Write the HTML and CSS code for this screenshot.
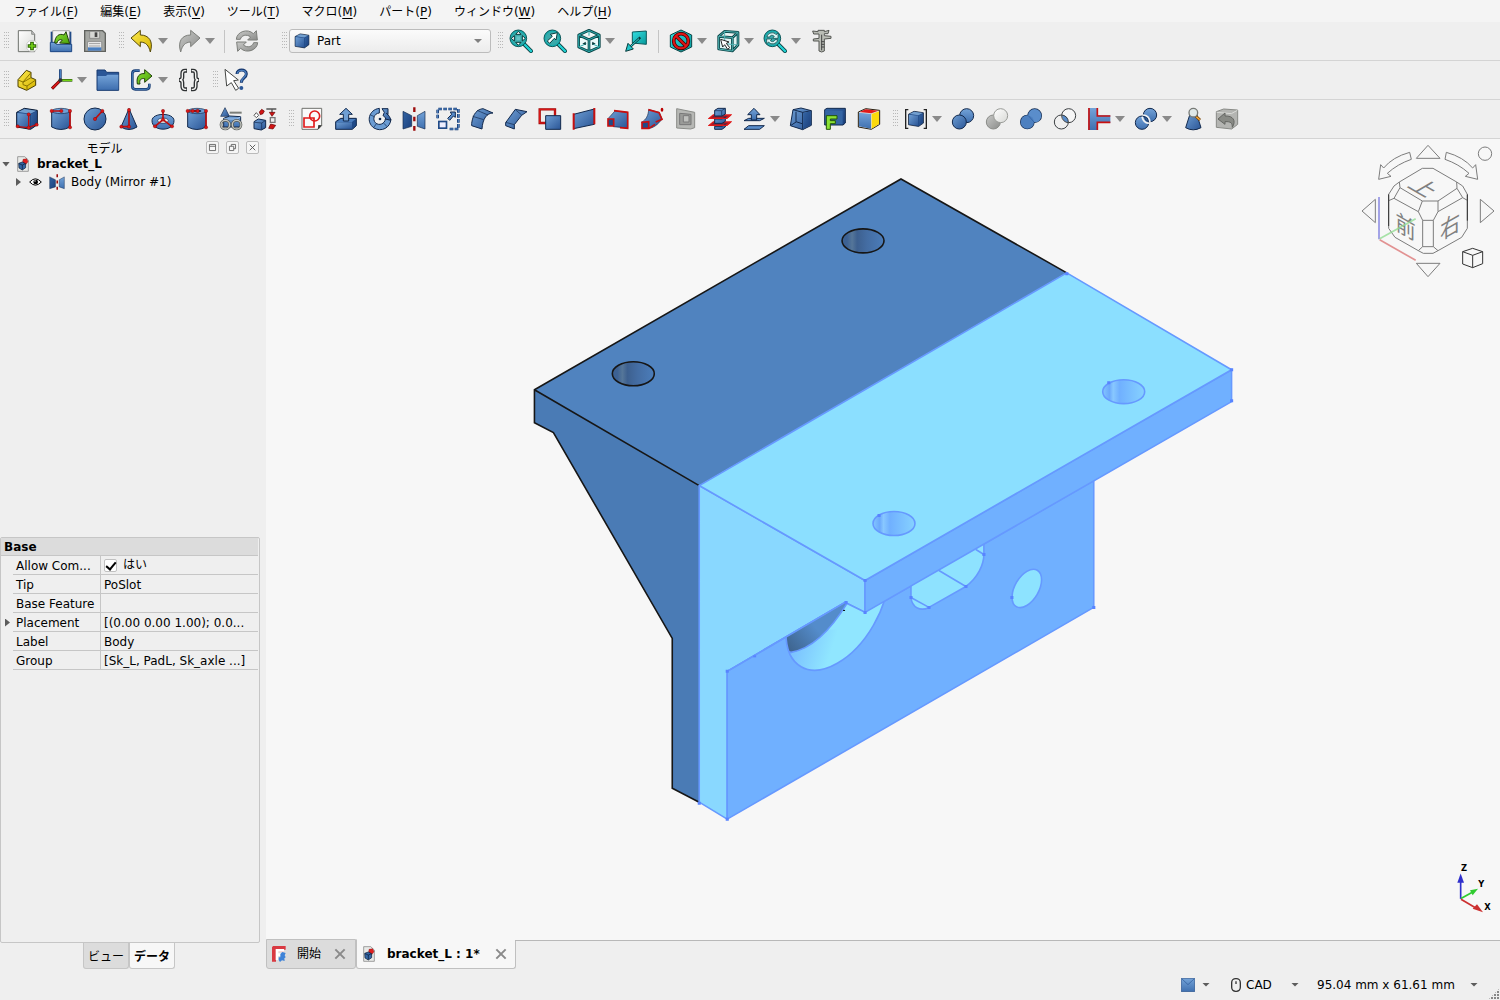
FILE: index.html
```html
<!DOCTYPE html>
<html lang="ja">
<head>
<meta charset="utf-8">
<title>bracket_L</title>
<link rel="stylesheet" href="styles.css">
</head>
<body>
<svg class="defs" aria-hidden="true">
  <defs>
    <linearGradient id="gb" x1="0" y1="0" x2="1" y2="1"><stop offset="0" stop-color="#6f9fd4"/><stop offset="1" stop-color="#2a5596"/></linearGradient>
    <linearGradient id="gl" x1="0" y1="0" x2="0" y2="1"><stop offset="0" stop-color="#74a3d8"/><stop offset="1" stop-color="#3f70b0"/></linearGradient>
    <linearGradient id="gd" x1="0" y1="0" x2="1" y2="1"><stop offset="0" stop-color="#3465a4"/><stop offset="1" stop-color="#1b3f7c"/></linearGradient>
    <linearGradient id="gt" x1="0" y1="0" x2="1" y2="1"><stop offset="0" stop-color="#34e0e2"/><stop offset="1" stop-color="#06989a"/></linearGradient>
    <linearGradient id="gg" x1="0" y1="0" x2="1" y2="1"><stop offset="0" stop-color="#c8c9c7"/><stop offset="1" stop-color="#8b8c8a"/></linearGradient>
    <linearGradient id="gy" x1="0" y1="0" x2="1" y2="1"><stop offset="0" stop-color="#fce94f"/><stop offset="1" stop-color="#d5b400"/></linearGradient>
    <linearGradient id="gn" x1="0" y1="0" x2="1" y2="1"><stop offset="0" stop-color="#8ae234"/><stop offset="1" stop-color="#4aa00a"/></linearGradient>
    <linearGradient id="gw" x1="0" y1="0" x2="1" y2="1"><stop offset="0" stop-color="#ffffff"/><stop offset="1" stop-color="#d8d9d6"/></linearGradient>
    <symbol id="cube" viewBox="0 0 72 72"><path d="M5 16 28 4 67 10 67 53 47 67 5 60Z" fill="#204a87" stroke="#0b1b33" stroke-width="3"/><path d="M7 18 45 22 45 64 7 58Z" fill="url(#gb)"/><path d="M9 15 28 6 64 11 46 20Z" fill="#729fcf"/><path d="M48 22 65 13V51L48 64Z" fill="url(#gd)"/></symbol>
    <symbol id="mirror" viewBox="0 0 72 72"><path d="M3 13 29 26V58L3 66Z" fill="url(#gd)" stroke="#12294d" stroke-width="2"/><path d="M69 13 46 26V58L69 66Z" fill="url(#gl)" stroke="#12294d" stroke-width="2"/><path d="M37 1V71" stroke="#9c0b0b" stroke-width="7" stroke-dasharray="14 14"/></symbol>
    <symbol id="doc" viewBox="0 0 36 48"><path d="M2 2H23L34 12V46H2Z" fill="#e9eae8" stroke="#777" stroke-width="2"/><path d="M18 10 29 8 33 17 26 26 17 20Z" fill="#e02020" stroke="#6b0000" stroke-width="1"/><path d="M5 22 16 18 26 23V35L16 42 6 36Z" fill="#3465a4" stroke="#0b1b33" stroke-width="2"/><path d="M6 23 16 27 25 23M16 27V41" stroke="#0b1b33" stroke-width="2" fill="none"/></symbol>
    <symbol id="zoomlens" viewBox="0 0 72 72"><path d="M44 44 66 66" stroke="#0c3536" stroke-width="12" stroke-linecap="square"/><path d="M46 46 66 66" stroke="#20d0d2" stroke-width="7" stroke-linecap="square"/><circle cx="28" cy="28" r="25" fill="#16adaf" stroke="#0d5658" stroke-width="3"/><circle cx="28" cy="28" r="20" fill="#39a9aa"/></symbol>
    <symbol id="close" viewBox="0 0 36 36"><path d="M4 4 32 32M32 4 4 32" stroke="#8a8a8a" stroke-width="6"/></symbol>
  </defs>
</svg>

<nav class="menubar">
  <button type="button">ファイル(<u>F</u>)</button>
  <button type="button">編集(<u>E</u>)</button>
  <button type="button">表示(<u>V</u>)</button>
  <button type="button">ツール(<u>T</u>)</button>
  <button type="button">マクロ(<u>M</u>)</button>
  <button type="button">パート(<u>P</u>)</button>
  <button type="button">ウィンドウ(<u>W</u>)</button>
  <button type="button">ヘルプ(<u>H</u>)</button>
</nav>

<div class="toolrow">
  <div class="toolbar">
    <span class="grip"></span>
    <button class="tool" type="button" aria-label="新規"><svg viewBox="0 0 72 72"><path d="M10 5H50L59 16V68H10Z" fill="url(#gw)" stroke="#6d706b" stroke-width="3"/><path d="M50 5V16H59" fill="#bbb" stroke="#6d706b" stroke-width="2"/><circle cx="51" cy="51" r="17" fill="#fff" stroke="#b8bab6" stroke-width="2"/><path d="M51 38V64M38 51H64" stroke="#2c6204" stroke-width="11"/><path d="M51 41V61M41 51H61" stroke="#73d216" stroke-width="5"/></svg></button>
    <button class="tool" type="button" aria-label="開く"><svg viewBox="0 0 72 72"><path d="M5 8H67V68H5Z" fill="#204a87"/><path d="M11 5H61V50H11Z" fill="#f2f2f2" stroke="#888" stroke-width="2"/><path d="M4 40H18L22 46H68V68H4Z" fill="url(#gl)" stroke="#204a87" stroke-width="3"/><path d="M17 42C18 20 32 12 45 18L51 8 62 44 32 42 40 33C32 30 26 34 24 42Z" fill="url(#gn)" stroke="#21400a" stroke-width="3"/></svg></button>
    <button class="tool" type="button" aria-label="保存"><svg viewBox="0 0 72 72"><path d="M5 5H59L67 13V67H5Z" fill="#a5a7a3" stroke="#60625e" stroke-width="4"/><path d="M20 7H50V28H20Z" fill="#d6d7d4" stroke="#777" stroke-width="2"/><path d="M35 10H43V24H35Z" fill="#444"/><path d="M14 38H56V65H14Z" fill="#f4f4f4" stroke="#777" stroke-width="2"/><path d="M18 44H52M18 51H52" stroke="#999" stroke-width="3"/><path d="M15 55H55V65H15Z" fill="#4a7fc0"/></svg></button>
  </div>
  <div class="toolbar">
    <span class="grip"></span>
    <button class="tool" type="button" aria-label="元に戻す"><svg viewBox="0 0 72 72"><path d="M3 27 31 4V18C57 18 71 37 61 69 56 49 48 40 31 39V53Z" fill="url(#gy)" stroke="#54480a" stroke-width="3"/></svg></button><button class="drop" type="button" aria-label="履歴"></button>
    <button class="tool" type="button" aria-label="やり直す"><svg viewBox="0 0 72 72"><path d="M69 27 41 4V18C15 18 1 37 11 69 16 49 24 40 41 39V53Z" fill="url(#gg)" stroke="#7d7f7b" stroke-width="3"/></svg></button><button class="drop" type="button" aria-label="履歴"></button>
    <span class="sep"></span>
    <button class="tool" type="button" aria-label="更新"><svg viewBox="0 0 72 72"><path d="M4 31C5 8 38-3 55 14L64 5 67 33H38L47 24C34 14 19 19 16 31Z" fill="url(#gg)" stroke="#7c7e7a" stroke-width="3"/><path d="M68 41C67 64 34 75 17 58L8 67 5 39H34L25 48C38 58 53 53 56 41Z" fill="url(#gg)" stroke="#7c7e7a" stroke-width="3"/></svg></button>
  </div>
  <div class="toolbar workbench">
    <span class="grip"></span>
    <label class="combo"><svg class="i16"><use href="#cube"/></svg><select aria-label="ワークベンチ"><option>Part</option></select></label>
  </div>
  <div class="toolbar">
    <span class="grip"></span>
    <button class="tool" type="button" aria-label="全体表示"><svg viewBox="0 0 72 72"><use href="#zoomlens"/><path d="M28 7 36 16H20ZM28 49 36 40H20ZM7 28 16 20V36ZM49 28 40 20V36Z" fill="#fff" stroke="#083b3c" stroke-width="3"/><path d="M22 22H34V34H22Z" fill="#63c5c6"/></svg></button>
    <button class="tool" type="button" aria-label="選択表示"><svg viewBox="0 0 72 72"><use href="#zoomlens"/><path d="M13 36 28 22 22 16 43 11 39 33 34 28 20 43Z" fill="#fff" stroke="#083b3c" stroke-width="3"/></svg></button>
    <button class="tool" type="button" aria-label="アイソメトリック"><svg viewBox="0 0 72 72"><path d="M36 4 67 18V54L36 68 5 54V18ZM5 18 36 32 67 18M36 32V68" fill="#eafafa" stroke="#0c4749" stroke-width="8" stroke-linejoin="round"/><path d="M36 4 67 18V54L36 68 5 54V18ZM5 18 36 32 67 18M36 32V68M5 54 28 44M67 54 45 44M36 4V20" fill="none" stroke="#2aa9ab" stroke-width="3"/><path d="M16 44 26 38 27 48ZM56 44 46 38 45 48Z" fill="#083b3c"/></svg></button><button class="drop" type="button" aria-label="ビュー"></button>
    <button class="tool" type="button" aria-label="面に正対"><svg viewBox="0 0 72 72"><path d="M25 9 67 6V46L25 42Z" fill="url(#gt)" stroke="#0a5a5c" stroke-width="3"/><path d="M49 25 20 52" stroke="#083b3c" stroke-width="7"/><path d="M45 29 20 52" stroke="#34e0e2" stroke-width="3"/><path d="M5 67 12 43 28 60Z" fill="#20c5c8" stroke="#083b3c" stroke-width="3"/></svg></button>
    <span class="sep"></span>
    <button class="tool" type="button" aria-label="描画スタイル"><svg viewBox="0 0 72 72"><path d="M36 3 68 18V54L36 69 4 54V18Z" fill="url(#gt)" stroke="#0a4546" stroke-width="3"/><circle cx="36" cy="36" r="22" fill="none" stroke="#4b0000" stroke-width="11"/><path d="M21 21 51 51" stroke="#4b0000" stroke-width="11"/><circle cx="36" cy="36" r="22" fill="none" stroke="#e01515" stroke-width="6"/><path d="M21 21 51 51" stroke="#e01515" stroke-width="6"/></svg></button><button class="drop" type="button" aria-label="スタイル"></button>
    <button class="tool" type="button" aria-label="選択モード"><svg viewBox="0 0 72 72"><path d="M8 22 26 7 66 10 66 48 49 66 8 60ZM8 22 49 26 66 10M49 26V66" fill="#dff3f3" stroke="#0c4749" stroke-width="8" stroke-linejoin="round"/><path d="M8 22 26 7 66 10 66 48 49 66 8 60ZM8 22 49 26 66 10M49 26V66M26 7V44M26 44 66 48" fill="none" stroke="#4fb1b2" stroke-width="3"/><path d="M14 31 39 39 31 43 41 56 35 61 26 47 20 54Z" fill="#fff" stroke="#222" stroke-width="3"/></svg></button><button class="drop" type="button" aria-label="選択"></button>
    <button class="tool" type="button" aria-label="ズーム"><svg viewBox="0 0 72 72"><use href="#zoomlens"/><path d="M12 24C14 10 34 8 39 17L45 12V28H29L34 22C28 17 22 18 20 24ZM44 32C42 46 22 48 17 39L11 44V30H27L22 35C28 40 34 38 36 32Z" fill="#d9f4f4" stroke="#083b3c" stroke-width="2"/></svg></button><button class="drop" type="button" aria-label="倍率"></button>
    <button class="tool" type="button" aria-label="計測"><svg viewBox="0 0 72 72"><path d="M8 6 24 8V4H43V8L57 4 54 14H43V20L63 22V28L43 30V66L35 69 27 66V36L10 36V30L27 28V15H11Z" fill="#babdb6" stroke="#555753" stroke-width="3"/><path d="M35 17V64M43 38H34M43 46H34M43 54H34" stroke="#444" stroke-width="3"/></svg></button>
  </div>
</div>

<div class="toolrow">
  <div class="toolbar">
    <span class="grip"></span>
    <button class="tool" type="button" aria-label="パーツ"><svg viewBox="0 0 72 72"><path d="M9 35 34 7 48 13V29L62 35V52L35 67 9 56Z" fill="url(#gy)" stroke="#4a3f00" stroke-width="3"/><path d="M9 36 24 42 48 14M24 42V50L36 54 62 36M36 54V66M24 43 48 29" fill="none" stroke="#8a7500" stroke-width="3"/></svg></button>
    <button class="tool" type="button" aria-label="座標系"><svg viewBox="0 0 72 72"><path d="M34 37V4" stroke="#15356a" stroke-width="8"/><path d="M34 37V5" stroke="#4a7fc0" stroke-width="4"/><path d="M36 37H70" stroke="#2d6108" stroke-width="8"/><path d="M36 37H69" stroke="#73d216" stroke-width="4"/><path d="M32 39 9 62" stroke="#6b0000" stroke-width="9"/><path d="M32 39 10 61" stroke="#dd1818" stroke-width="5"/><circle cx="34" cy="37" r="6" fill="#333"/></svg></button><button class="drop" type="button" aria-label="データム"></button>
    <button class="tool" type="button" aria-label="グループ"><svg viewBox="0 0 72 72"><path d="M3 6H27L32 13H68V67H3Z" fill="#2b5797" stroke="#183a70" stroke-width="3"/><path d="M5 24H30L34 20H67V65H5Z" fill="url(#gl)"/></svg></button>
    <button class="tool" type="button" aria-label="リンク"><svg viewBox="0 0 72 72"><path d="M29 8H16Q7 8 7 17V55Q7 64 16 64H49Q58 64 58 55V47" fill="none" stroke="#173d74" stroke-width="8"/><path d="M29 8H16Q7 8 7 17V55Q7 64 16 64H49Q58 64 58 55V47" fill="none" stroke="#4b80bf" stroke-width="3"/><path d="M22 48C18 25 29 15 44 17V5L66 24 44 43V32C33 30 27 36 30 48Z" fill="url(#gn)" stroke="#21400a" stroke-width="3"/></svg></button><button class="drop" type="button" aria-label="リンク操作"></button>
    <button class="tool" type="button" aria-label="変数セット"><svg viewBox="0 0 72 72"><path d="M30 8H24Q16 8 16 17V28Q16 36 6 36 16 36 16 44V55Q16 64 24 64H30M42 8H48Q56 8 56 17V28Q56 36 66 36 56 36 56 44V55Q56 64 48 64H42" fill="none" stroke="#2e3133" stroke-width="12"/><path d="M28 8H24Q16 8 16 17V28Q16 36 8 36 16 36 16 44V55Q16 64 24 64H28M44 8H48Q56 8 56 17V28Q56 36 64 36 56 36 56 44V55Q56 64 48 64H44" fill="none" stroke="#f4f4f2" stroke-width="4"/></svg></button>
  </div>
  <div class="toolbar">
    <span class="grip"></span>
    <button class="tool" type="button" aria-label="ヘルプ"><svg viewBox="0 0 72 72"><path d="M39 18C39 2 67 2 67 18 67 30 52 29 52 44" fill="none" stroke="#16366c" stroke-width="9"/><path d="M40 17C40 4 66 4 66 18 66 29 52 28 52 43" fill="none" stroke="#4b7fc0" stroke-width="4"/><circle cx="52" cy="60" r="6" fill="#2b5797"/><path d="M3 4 43 36 29 38 44 61 35 67 22 44 8 54Z" fill="#fff" stroke="#454745" stroke-width="3"/></svg></button>
  </div>
</div>

<div class="toolrow">
  <div class="toolbar">
    <span class="grip"></span>
    <button class="tool" type="button" aria-label="直方体"><svg viewBox="0 0 72 72"><use href="#cube"/><path d="M41 22V62M7 59 41 62 66 52" stroke="#c00d0d" stroke-width="4" fill="none"/><g fill="#dc1616" stroke="#640000"><circle cx="41" cy="22" r="5"/><circle cx="41" cy="62" r="5"/><circle cx="8" cy="58" r="5"/><circle cx="65" cy="53" r="5"/></g></svg></button>
    <button class="tool" type="button" aria-label="円柱"><svg viewBox="0 0 72 72"><path d="M8 13V60Q36 75 63 60V13Z" fill="url(#gb)" stroke="#12294d" stroke-width="3"/><ellipse cx="36" cy="12" rx="27" ry="8" fill="#6f9fd4" stroke="#12294d" stroke-width="2"/><path d="M8 12H37M63 12V61" stroke="#c00d0d" stroke-width="5"/><g fill="#dc1616" stroke="#640000"><circle cx="8" cy="12" r="5"/><circle cx="37" cy="12" r="5"/><circle cx="63" cy="12" r="5"/><circle cx="63" cy="61" r="5"/></g></svg></button>
    <button class="tool" type="button" aria-label="球"><svg viewBox="0 0 72 72"><circle cx="36" cy="36" r="33" fill="url(#gb)" stroke="#12294d" stroke-width="3"/><path d="M36 36 58 12" stroke="#c00d0d" stroke-width="5"/><g fill="#dc1616" stroke="#640000"><circle cx="36" cy="36" r="5"/><circle cx="58" cy="12" r="5"/></g></svg></button>
    <button class="tool" type="button" aria-label="円錐"><svg viewBox="0 0 72 72"><path d="M36 5 60 60Q36 75 12 60Z" fill="url(#gb)" stroke="#12294d" stroke-width="3"/><path d="M36 10V59H13" fill="none" stroke="#c00d0d" stroke-width="5"/><g fill="#dc1616" stroke="#640000"><circle cx="36" cy="9" r="5"/><circle cx="36" cy="59" r="5"/><circle cx="13" cy="59" r="5"/></g></svg></button>
    <button class="tool" type="button" aria-label="トーラス"><svg viewBox="0 0 72 72"><path d="M3 41C3 16 69 16 69 41 69 75 3 75 3 41Z" fill="url(#gl)" stroke="#12294d" stroke-width="3"/><ellipse cx="36" cy="41" rx="16" ry="8" fill="#eee" stroke="#12294d" stroke-width="2"/><path d="M36 12V38L12 58M36 38 62 58" fill="none" stroke="#c00d0d" stroke-width="5"/><g fill="#dc1616" stroke="#640000"><circle cx="36" cy="12" r="5"/><circle cx="36" cy="38" r="5"/><circle cx="12" cy="58" r="5"/><circle cx="63" cy="58" r="5"/></g></svg></button>
    <button class="tool" type="button" aria-label="チューブ"><svg viewBox="0 0 72 72"><path d="M8 13V60Q36 75 63 60V13Z" fill="url(#gb)" stroke="#12294d" stroke-width="3"/><ellipse cx="36" cy="12" rx="27" ry="8" fill="#6f9fd4" stroke="#12294d" stroke-width="2"/><ellipse cx="36" cy="12" rx="13" ry="4" fill="#12294d"/><path d="M8 12H40M63 12V61" stroke="#c00d0d" stroke-width="5"/><g fill="#dc1616" stroke="#640000"><circle cx="8" cy="12" r="5"/><circle cx="23" cy="12" r="5"/><circle cx="38" cy="12" r="5"/><circle cx="63" cy="12" r="5"/><circle cx="63" cy="61" r="5"/></g></svg></button>
    <button class="tool" type="button" aria-label="プリミティブ"><svg viewBox="0 0 72 72"><path d="M18 2 31 28H5Z" fill="url(#gb)" stroke="#12294d" stroke-width="2"/><path d="M32 17H68" stroke="#7b7e79" stroke-width="6"/><path d="M14 34 32 27 65 29V60H14Z" fill="url(#gl)" stroke="#12294d" stroke-width="3"/><path d="M15 36H54L64 30" stroke="#9dbfe6" stroke-width="3" fill="none"/><g fill="none" stroke="#555854" stroke-width="8"><circle cx="19" cy="53" r="13"/><circle cx="53" cy="53" r="13"/></g><g fill="none" stroke="#c4c6c1" stroke-width="4"><circle cx="19" cy="53" r="13"/><circle cx="53" cy="53" r="13"/></g></svg></button>
    <button class="tool" type="button" aria-label="シェイプビルダー"><svg viewBox="0 0 72 72"><path d="M3 44 16 36 38 40V62L25 69 3 65Z" fill="url(#gb)" stroke="#12294d" stroke-width="3"/><path d="M4 46 26 48 37 41M26 48V68" fill="none" stroke="#12294d" stroke-width="2"/><path d="M10 17 17 25 10 32 3 25Z" fill="#fff" stroke="#555" stroke-width="3"/><path d="M52 32H66V46H52Z" fill="#eee" stroke="#777" stroke-width="4"/><path d="M40 6H70M57 8V24" stroke="#555" stroke-width="4"/><path d="M19 15 26 7 34 12 30 20 22 23ZM49 16H66L57 28ZM47 64 53 51 68 55 60 66Z" fill="#d21515" stroke="#640000" stroke-width="2"/></svg></button>
  </div>
  <div class="toolbar">
    <span class="grip"></span>
    <button class="tool" type="button" aria-label="スケッチ"><svg viewBox="0 0 72 72"><path d="M6 4H65V56L54 67H6Z" fill="#fafafa" stroke="#70726e" stroke-width="3"/><path d="M53 68 55 54 66 55Z" fill="#333"/><circle cx="44" cy="27" r="15" fill="none" stroke="#e01b1b" stroke-width="5"/><path d="M12 33H42V60H12Z" fill="none" stroke="#e01b1b" stroke-width="5"/></svg></button>
    <button class="tool" type="button" aria-label="押し出し"><svg viewBox="0 0 72 72"><path d="M5 44 20 34H67V56L55 67H5Z" fill="#204a87" stroke="#12294d" stroke-width="3"/><path d="M7 46H54V65H7Z" fill="url(#gb)"/><path d="M7 45 21 36H65L54 45Z" fill="#4b7fc0"/><path d="M28 42V22H17L36 4 55 22H44V42Z" fill="#6f9fd4" stroke="#12294d" stroke-width="3"/></svg></button>
    <button class="tool" type="button" aria-label="回転"><svg viewBox="0 0 72 72"><path d="M34 4V18C18 19 13 37 22 47 33 58 51 50 52 36H69C67 63 40 76 18 63-7 46 2 8 34 4Z" fill="#6b9cd3" stroke="#12294d" stroke-width="3"/><path d="M42 5H60V23L55 19C63 25 67 31 68 40L53 36C52 31 50 28 45 26L49 16Z" fill="url(#gb)" stroke="#12294d" stroke-width="3"/><circle cx="36" cy="36" r="4" fill="#12294d"/><path d="M8 24 19 29M18 60 26 49M48 49 57 59" stroke="#12294d" stroke-width="2"/></svg></button>
    <button class="tool" type="button" aria-label="ミラー"><svg viewBox="0 0 72 72"><use href="#mirror"/></svg></button>
    <button class="tool" type="button" aria-label="拡大縮小"><svg viewBox="0 0 72 72"><path d="M5 34V6H67V66H39" fill="none" stroke="#173a72" stroke-width="8" stroke-dasharray="11 4"/><path d="M5 34V6H67V66H39" fill="none" stroke="#5a8dcb" stroke-width="3" stroke-dasharray="11 4"/><path d="M6 41H34V66H6Z" fill="#204a87"/><path d="M11 46H29V61H11Z" fill="#eef"/><path d="M35 34 47 22 43 15H58V31L52 27 41 40Z" fill="#5a8dcb" stroke="#12294d" stroke-width="3"/></svg></button>
    <button class="tool" type="button" aria-label="フィレット"><svg viewBox="0 0 72 72"><path d="M5 49C9 19 22 7 39 5L69 18C51 18 38 34 36 66L5 56Z" fill="url(#gb)" stroke="#12294d" stroke-width="3"/><path d="M8 28 41 38M21 10 54 24" stroke="#12294d" stroke-width="2"/></svg></button>
    <button class="tool" type="button" aria-label="面取り"><svg viewBox="0 0 72 72"><path d="M5 47 34 7 69 14 53 25 31 53V66L5 56Z" fill="url(#gb)" stroke="#12294d" stroke-width="3"/><path d="M5 46 31 53M34 8 53 24" stroke="#12294d" stroke-width="2"/></svg></button>
    <button class="tool" type="button" aria-label="面を作成"><svg viewBox="0 0 72 72"><path d="M5 7H51V48H5Z" fill="#eee" stroke="#a30a0a" stroke-width="7"/><path d="M5 7H51V48H5Z" fill="none" stroke="#e01b1b" stroke-width="3"/><path d="M23 26H68V67H23Z" fill="url(#gb)" stroke="#12294d" stroke-width="3"/></svg></button>
    <button class="tool" type="button" aria-label="ルールド面"><svg viewBox="0 0 72 72"><path d="M5 22 67 6V52L5 65Z" fill="url(#gb)" stroke="#12294d" stroke-width="3"/><path d="M5 19V68M67 3V52" stroke="#c80f0f" stroke-width="6"/></svg></button>
    <button class="tool" type="button" aria-label="ロフト"><svg viewBox="0 0 72 72"><path d="M6 35 27 12 65 16V63L22 59Z" fill="url(#gb)" stroke="#12294d" stroke-width="2"/><path d="M24 11 65 16V64L42 62" fill="none" stroke="#c80f0f" stroke-width="5"/><path d="M6 36H23V57H6Z" fill="#204a87" stroke="#c80f0f" stroke-width="5"/></svg></button>
    <button class="tool" type="button" aria-label="スイープ"><svg viewBox="0 0 72 72"><path d="M5 46C18 38 25 26 26 8L58 16 66 36C54 53 39 64 25 64Z" fill="url(#gb)" stroke="#12294d" stroke-width="2"/><path d="M25 8 57 17 66 37 47 45M27 64 45 52" fill="none" stroke="#c80f0f" stroke-width="5"/><path d="M6 46 26 44V64H6Z" fill="#204a87" stroke="#c80f0f" stroke-width="5"/><ellipse cx="66" cy="8" rx="4" ry="6" fill="#b00"/></svg></button>
    <button class="tool" type="button" aria-label="断面"><svg viewBox="0 0 72 72"><path d="M8 5 62 16V62L50 66 8 63Z" fill="#b7b8b5" stroke="#8b8d89" stroke-width="3"/><path d="M17 19 51 22V53H17Z" fill="#9a9b98" stroke="#777" stroke-width="3"/><path d="M28 26H45V45H28Z" fill="#c0c1be" stroke="#7a7a7a" stroke-width="3"/></svg></button>
    <button class="tool" type="button" aria-label="断面作成"><svg viewBox="0 0 72 72"><path d="M16 24H68L56 34H4ZM16 45H68L56 55H4Z" fill="#7c2037" stroke="#e01b1b" stroke-width="4"/><path d="M20 10 30 4H52V21L42 27H20ZM20 36H42L52 30V43L42 49H20ZM20 58H42L52 52V60L42 67H20Z" fill="url(#gb)" stroke="#12294d" stroke-width="3"/><path d="M20 11H41L52 4M41 12V26" fill="none" stroke="#12294d" stroke-width="2"/><path d="M4 34H56L68 24M4 55H56L68 45" fill="none" stroke="#e01b1b" stroke-width="4"/></svg></button>
    <button class="tool" type="button" aria-label="オフセット"><svg viewBox="0 0 72 72"><path d="M6 41 20 34H67L53 41ZM6 67 20 56H67L53 67Z" fill="#5b8ecb" stroke="#12294d" stroke-width="3"/><path d="M28 39V23H17L36 4 54 23H44V39Z" fill="url(#gl)" stroke="#12294d" stroke-width="3"/></svg></button><button class="drop" type="button" aria-label="オフセット種別"></button>
    <button class="tool" type="button" aria-label="厚み"><svg viewBox="0 0 72 72"><path d="M12 8 36 3 67 11V55L41 68 4 56Z" fill="url(#gb)" stroke="#12294d" stroke-width="3"/><path d="M12 8 41 16 67 11M41 16V67M21 14V44L39 50M21 45 6 55" fill="none" stroke="#12294d" stroke-width="3"/><path d="M43 18 65 13V54L43 65Z" fill="url(#gd)"/></svg></button>
    <button class="tool" type="button" aria-label="面に投影"><svg viewBox="0 0 72 72"><path d="M5 8 12 4H67V48L60 54H5Z" fill="url(#gd)" stroke="#12294d" stroke-width="3"/><path d="M7 11H59V52H7Z" fill="#3465a4"/><path d="M10 26H42V36H22V41H37V50H22V67H10Z" fill="#8ae234" stroke="#235607" stroke-width="3"/></svg></button>
    <button class="tool" type="button" aria-label="面ごとの色"><svg viewBox="0 0 72 72"><path d="M4 15 26 5 68 10V52L43 67 4 60Z" fill="#ddd" stroke="#281f10" stroke-width="3"/><path d="M6 17 42 21V65L6 58Z" fill="url(#gl)"/><path d="M8 15 26 7 64 11 43 19Z" fill="#e01818"/><path d="M44 21 66 13V51L44 65Z" fill="#fbd90c"/></svg></button>
  </div>
  <div class="toolbar">
    <span class="grip"></span>
    <button class="tool" type="button" aria-label="コンパウンド"><svg viewBox="0 0 72 72"><path d="M13 8H5V64H13M59 8H67V64H59" fill="none" stroke="#222" stroke-width="4"/><svg x="9" y="10" width="54" height="52"><use href="#cube"/></svg></svg></button><button class="drop" type="button" aria-label="コンパウンド操作"></button>
    <button class="tool" type="button" aria-label="ブーリアン"><svg viewBox="0 0 72 72"><circle cx="47" cy="26" r="21" fill="url(#gl)" stroke="#12294d" stroke-width="3"/><circle cx="25" cy="45" r="21" fill="url(#gb)" stroke="#12294d" stroke-width="3"/></svg></button>
    <button class="tool" type="button" aria-label="切り取り"><svg viewBox="0 0 72 72"><circle cx="25" cy="45" r="21" fill="url(#gg)" stroke="#8a8c88" stroke-width="3"/><circle cx="47" cy="26" r="21" fill="url(#gw)" stroke="#9a9c98" stroke-width="3"/></svg></button>
    <button class="tool" type="button" aria-label="結合"><svg viewBox="0 0 72 72"><g stroke="#12294d" stroke-width="6"><circle cx="47" cy="26" r="19"/><circle cx="25" cy="45" r="19"/></g><circle cx="47" cy="26" r="20" fill="#5a8dcb"/><circle cx="25" cy="45" r="20" fill="#4d80c0"/><path d="M28 26 45 45" stroke="#3566a8" stroke-width="3"/></svg></button>
    <button class="tool" type="button" aria-label="交差"><svg viewBox="0 0 72 72"><circle cx="47" cy="26" r="21" fill="#f6f6f6"/><circle cx="25" cy="45" r="21" fill="#f0f0f0"/><path d="M27 25Q45 24 46 45 29 48 27 25Z" fill="#5a8dcb"/><g fill="none" stroke="#3c4043" stroke-width="3"><circle cx="47" cy="26" r="21"/><circle cx="25" cy="45" r="21"/></g></svg></button>
    <button class="tool" type="button" aria-label="接続"><svg viewBox="0 0 72 72"><path d="M4 3H32V25H70V48H32V69H4Z" fill="url(#gl)"/><path d="M6 3V69M31 3V27H70M70 46H31V69" fill="none" stroke="#c80f0f" stroke-width="5"/></svg></button><button class="drop" type="button" aria-label="接続操作"></button>
    <button class="tool" type="button" aria-label="分割"><svg viewBox="0 0 72 72"><circle cx="48" cy="24" r="20" fill="url(#gl)" stroke="#12294d" stroke-width="3"/><circle cx="24" cy="47" r="20" fill="url(#gl)" stroke="#12294d" stroke-width="3"/><path d="M26 24Q46 24 48 46M24 29Q30 50 45 48" fill="none" stroke="#f3f3f3" stroke-width="5"/><path d="M31 29Q43 31 43 44 32 42 31 29Z" fill="#3465a4" stroke="#12294d" stroke-width="2"/></svg></button><button class="drop" type="button" aria-label="分割操作"></button>
    <button class="tool" type="button" aria-label="形状確認"><svg viewBox="0 0 72 72"><path d="M28 18H46L60 62Q36 75 14 62Z" fill="url(#gb)" stroke="#12294d" stroke-width="3"/><path d="M44 27 57 39" stroke="#7a4300" stroke-width="9"/><path d="M46 29 56 38" stroke="#fcaf3e" stroke-width="4"/><circle cx="37" cy="17" r="13" fill="#dfe8e8" stroke="#777a76" stroke-width="4"/></svg></button>
    <button class="tool" type="button" aria-label="デフィーチャリング"><svg viewBox="0 0 72 72"><path d="M4 14 26 6 68 9V52L50 66 4 61Z" fill="#b4b5b2" stroke="#888a86" stroke-width="3"/><path d="M5 16 49 20 67 10" stroke="#dadbd8" stroke-width="3" fill="none"/><path d="M9 36 30 18V27C55 26 64 41 52 61 52 48 48 43 30 44V52Z" fill="#888a85" stroke="#646662" stroke-width="3"/></svg></button>
  </div>
</div>

<main class="workspace">
  <aside class="dock">
    <header class="dock-title">
      <h2>モデル</h2>
      <button type="button" aria-label="格納"><svg viewBox="0 0 36 36"><path d="M8 8H28V28H8ZM8 14H28" fill="none" stroke="#666" stroke-width="3"/></svg></button>
      <button type="button" aria-label="フロート"><svg viewBox="0 0 36 36"><path d="M14 14V8H28V22H22M8 14H22V28H8Z" fill="none" stroke="#666" stroke-width="3"/></svg></button>
      <button type="button" aria-label="閉じる"><svg viewBox="0 0 36 36"><path d="M9 9 27 27M27 9 9 27" stroke="#555" stroke-width="3"/></svg></button>
    </header>
    <ul class="tree">
      <li><span class="open"></span><svg class="doc"><use href="#doc"/></svg><b>bracket_L</b></li>
      <li class="child"><span class="shut"></span><svg class="eye" viewBox="0 0 39 30"><path d="M2 15Q19-4 37 15 19 34 2 15Z" fill="#fff" stroke="#000" stroke-width="3"/><circle cx="20" cy="15" r="7"/><circle cx="18" cy="12" r="2" fill="#fff"/></svg><svg class="i16"><use href="#mirror"/></svg>Body (Mirror #1)</li>
    </ul>
    <section class="props">
      <table>
        <thead><tr><th colspan="3">Base</th></tr></thead>
        <tbody>
          <tr><td></td><th>Allow Com...</th><td><label><input type="checkbox" checked>はい</label></td></tr>
          <tr><td></td><th>Tip</th><td>PoSlot</td></tr>
          <tr><td></td><th>Base Feature</th><td></td></tr>
          <tr><td><span class="shut"></span></td><th>Placement</th><td>[(0.00 0.00 1.00); 0.0...</td></tr>
          <tr><td></td><th>Label</th><td>Body</td></tr>
          <tr><td></td><th>Group</th><td>[Sk_L, PadL, Sk_axle ...]</td></tr>
        </tbody>
      </table>
    </section>
    <div class="prop-tabs"><button type="button">ビュー</button><button type="button" class="active">データ</button></div>
  </aside>

  <section class="viewer">
    <div class="view3d">
      <svg class="model" viewBox="266 139 1234 801">
        <defs>
          <linearGradient id="hd"><stop offset="0" stop-color="#3c6193"/><stop offset=".12" stop-color="#3c6193"/><stop offset=".24" stop-color="#557699"/><stop offset=".36" stop-color="#3d608f"/><stop offset=".6" stop-color="#446da3"/><stop offset="1" stop-color="#4b7dba"/></linearGradient>
          <linearGradient id="hl"><stop offset="0" stop-color="#82c6ff"/><stop offset=".16" stop-color="#6ca9fb"/><stop offset=".25" stop-color="#88c8ff"/><stop offset=".4" stop-color="#70b0ff"/><stop offset="1" stop-color="#86d2ff"/></linearGradient>
          <linearGradient id="bore" gradientUnits="userSpaceOnUse" x1="786" y1="655" x2="826" y2="668"><stop offset="0" stop-color="#78bcff"/><stop offset="1" stop-color="#90e6ff"/></linearGradient>
          <linearGradient id="bd" gradientUnits="userSpaceOnUse" x1="790" y1="652" x2="835" y2="615"><stop offset="0" stop-color="#3e648e"/><stop offset=".6" stop-color="#548ccb"/></linearGradient>
          <linearGradient id="small" gradientUnits="userSpaceOnUse" x1="1012" y1="588" x2="1042" y2="588"><stop offset="0" stop-color="#86d0ff"/><stop offset=".5" stop-color="#90e8ff"/><stop offset="1" stop-color="#80c8ff"/></linearGradient>
          <clipPath id="front"><path d="M727 672 845 603 865 613 1094 481V608L727 820Z"/></clipPath>
          <clipPath id="bigHole"><ellipse cx="837" cy="605" rx="72" ry="42" transform="rotate(-60 837 605)"/></clipPath>
        </defs>
        <path d="M534 390 699 486V803L672 789V639L553 433 534 423Z" fill="#4a7bb5"/>
        <path d="M901 179 1067 273 699 486 534 390Z" fill="#5083bf"/>
        <g stroke="#161616" stroke-width="1.6">
          <path d="M699 803 672 789V639L553 433 534 423V390L901 179 1067 273M534 390 699 486" fill="none"/>
          <g fill="url(#hd)"><ellipse cx="863" cy="241" rx="21" ry="12"/><ellipse cx="633" cy="374" rx="21" ry="12"/></g>
        </g>
        <g stroke="#6699ff" stroke-width="1.6" stroke-linejoin="round">
          <path d="M699 486 865 581V613L845 603 727 672V820L699 803Z" fill="#89d8ff"/>
          <path d="M727 672 845 603 865 613 1094 481V608L727 820Z" fill="#70b0ff"/>
          <g clip-path="url(#front)">
            <ellipse cx="837" cy="605" rx="72" ry="42" transform="rotate(-60 837 605)" fill="#90e6ff" stroke="none"/>
            <path d="M780 630H900V680H780Z" fill="url(#bore)" stroke="none" clip-path="url(#bigHole)"/>
            <g clip-path="url(#bigHole)"><path d="M791 653Q820 648 847 604L840 590 780 620 780 650Z" fill="url(#bd)"/></g>
            <ellipse cx="837" cy="605" rx="72" ry="42" transform="rotate(-60 837 605)" fill="none"/>
            <path d="M911 580V598C912 609 921 612 929 608L966 587C978 578 984 565 984 555V530Z" fill="#8ee2ff"/>
            <path d="M911 598 929 608M939 571 966 587M976 550 984 555" fill="none"/>
          </g>
          <ellipse cx="1027" cy="589" rx="21" ry="12" transform="rotate(-60 1027 589)" fill="#8de3ff"/>
          <path d="M865 581 1232 370V402L865 613Z" fill="#70b0ff"/>
          <path d="M1067 273 1232 370 865 581 699 486Z" fill="#8bdfff"/>
          <path d="M865 613 845 603 727 672" fill="none"/>
          <ellipse cx="894" cy="524" rx="21" ry="12" fill="url(#hl)"/>
          <ellipse cx="1124" cy="392" rx="21" ry="12" fill="url(#hl)"/>
        </g>
        <path d="M1067 274h.1M1232 370h.1M1232 401h.1M865 581h.1M865 613h.1M846 603h.1M727 672h.1M727 820h.1M699 804h.1M1094 608h.1M879 516h.1M1109 383h.1M1012 598h.1M911 598h.1M929 608h.1M966 587h.1M984 555h.1" stroke="#5884ff" stroke-width="3" stroke-linecap="square"/>
        <path d="M843 611h2" stroke="#000"/><path d="M753 657h3" stroke="#5884ff" stroke-width="2"/>
      </svg>

      <svg class="navcube" viewBox="0 9 450 441">
        <g fill="none" stroke="#7c7c7c" stroke-width="3" stroke-linejoin="round">
          <path d="M234 28 270 67H199ZM234 422 270 382H199ZM36 225 76 190V260ZM432 225 391 190V260Z"/>
          <circle cx="405" cy="53" r="20"/>
          <path d="M179 49Q128 63 101 96L92 86 86 130 123 121 112 112Q143 84 184 70ZM289 49Q340 63 368 96L377 86 383 130 346 121 357 112Q326 84 285 70Z"/>
          <path d="M217 97H249L320 138 321 157 264 195H217L150 155 148 138Z"/>
          <path d="M148 138 132 150 116 175V277L135 304 205 344 220 352H249L264 344 335 304 352 277V175L338 150 320 138M132 187 116 194M150 155 132 187 205 227 217 195M205 227 218 253V332L205 344M218 253H250V332H218M250 253 264 227V195M264 227 338 185 321 157M338 185 352 193M250 332 264 344"/>
          <path d="M116 175V270M352 175V254" stroke="#333"/>
          <path d="M338 347 368 337 398 347V383L368 395 338 384ZM338 347 368 358 398 347M368 358V395" stroke="#333"/>
        </g>
        <g class="face">
          <text transform="matrix(.866 .5 -.866 .5 222 155)" x="-35" y="26">上</text>
          <text transform="matrix(.866 .5 0 1 167 270)" x="-35" y="27">前</text>
          <text transform="matrix(.866 -.5 0 1 300 270)" x="-35" y="27">右</text>
        </g>
        <path d="M87 183V310" stroke="#9292e4" stroke-width="5"/><path d="M89 308 197 248" stroke="#92dc92" stroke-width="5" stroke-opacity=".8"/><path d="M89 311 197 373" stroke="#e29292" stroke-width="5"/>
      </svg>

      <svg class="axes" viewBox="0 0 150 170">
        <path d="M50 116V55" stroke="#3030cc" stroke-width="5"/><path d="M50 40 60 68H40Z" fill="#3030cc"/>
        <path d="M51 115 85 96" stroke="#30cc30" stroke-width="5"/><path d="M102 86 78 90 86 105Z" fill="#30cc30"/>
        <path d="M51 117 93 142" stroke="#cc3030" stroke-width="5"/><path d="M117 156 99 132 86 146Z" fill="#cc3030"/>
        <text x="51" y="32">Z</text><text x="103" y="82">Y</text><text x="121" y="151">X</text>
      </svg>
    </div>
    <div class="doc-tabs">
      <button type="button" class="tab"><svg class="logo" viewBox="0 0 42 48"><path d="M3 0H41V11H36V17H12V47H0V4Z" fill="#d93a42"/><path d="M11 9H36V17H19V22H31V30H19V42H11Z" fill="#fff"/><path d="M25 24 31 18 41 21 38 28 41 34 37 37 38 45 30 43 24 48 20 42V34H25Z" fill="#3f83d8"/></svg><span>開始</span><svg class="x"><use href="#close"/></svg></button>
      <button type="button" class="tab active"><svg class="doc"><use href="#doc"/></svg><b>bracket_L : 1*</b><svg class="x"><use href="#close"/></svg></button>
      <span class="rest"></span>
    </div>
  </section>
</main>

<footer class="status">
  <button type="button" class="swatch" aria-label="通知"><svg viewBox="0 0 42 42"><path d="M1 1H41V41H1Z" fill="url(#gl)" stroke="#204a87" stroke-width="2"/><path d="M2 2 21 20 40 2" fill="none" stroke="#2b5797" stroke-width="2"/></svg></button>
  <label class="navstyle"><svg viewBox="0 0 30 42"><rect x="2" y="2" width="26" height="38" rx="12" fill="none" stroke="#333" stroke-width="4"/><path d="M15 10V18" stroke="#333" stroke-width="4"/></svg><select aria-label="ナビゲーション"><option>CAD</option></select></label>
  <button type="button" class="dims">95.04 mm x 61.61 mm</button>
  <span class="sizegrip"></span>
</footer>
</body>
</html>
```
FILE: styles.css
```css
* { box-sizing: border-box; }
body {
  margin: 0;
  height: 100vh;
  display: flex;
  flex-direction: column;
  background: #efefef;
  color: #000;
  font: 12px/18px "DejaVu Sans", "Noto Sans CJK JP", sans-serif;
  overflow: hidden;
}
button, select {
  font: inherit;
  color: inherit;
  border: 0;
  margin: 0;
  padding: 0;
  background: none;
  appearance: none;
}
svg { display: block; flex: none; }
.defs { position: absolute; width: 0; height: 0; }
.i16 { width: 16px; height: 16px; }

/* menu bar */
.menubar {
  display: flex;
  height: 22px;
  padding-left: 3px;
  background: #f4f4f4;
}
.menubar button { padding: 2px 11px 0; white-space: nowrap; }
.menubar u { text-underline-offset: 2px; }

/* toolbars */
.toolrow {
  display: flex;
  height: 39px;
  border-bottom: 1px solid #d4d4d4;
}
.toolbar { display: flex; align-items: center; padding-left: 7px; }
.toolbar:first-child { padding-left: 4px; }
.toolbar.workbench { margin-left: 11px; }
.grip {
  width: 6px;
  height: 18px;
  background: conic-gradient(from 270deg at 1px 1px, #b8b8b8 90deg, transparent 0) 0 0 / 2px 3px;
}
.tool { width: 34px; height: 34px; padding: 5px; }
.tool > svg { width: 24px; height: 24px; }
.drop { width: 14px; height: 34px; margin-left: -1px; }
.drop::after {
  content: "";
  display: block;
  width: 10px;
  height: 6px;
  background: #8a8a8a;
  clip-path: polygon(0 0, 100% 0, 50% 100%);
}
.sep { width: 11px; height: 23px; background: linear-gradient(#c4c4c4, #c4c4c4) center / 1px 100% no-repeat; }
.combo {
  display: flex;
  align-items: center;
  gap: 7px;
  width: 202px;
  height: 24px;
  margin-left: 1px;
  padding: 0 8px 0 4px;
  border: 1px solid #bcbcbc;
  border-radius: 3px;
  background: linear-gradient(#fbfbfb, #ececec);
}
.combo select { flex: 1; }
.combo::after, .navstyle::after, .swatch::after, .dims::after {
  content: "";
  width: 8px;
  height: 4px;
  background: #808080;
  clip-path: polygon(0 0, 100% 0, 50% 100%);
}
.navstyle::after, .swatch::after, .dims::after { background: #5c5c5c; }

/* model dock */
.workspace { flex: 1; display: flex; min-height: 0; }
.dock { flex: 0 0 266px; display: flex; flex-direction: column; padding-right: 6px; }
.dock-title { display: flex; height: 16px; gap: 7px; padding: 2px 1px 0 0; }
.dock-title h2 { flex: 1; margin: 0; padding-left: 10px; text-align: center; font-size: 12px; font-weight: 400; line-height: 16px; }
.dock-title button { width: 13px; height: 13px; border: 1px solid #bbb; border-radius: 2px; background: #f6f6f6; }
.dock-title svg { width: 11px; height: 11px; }
.tree { flex: 382 1 0; margin: 0; padding: 0; list-style: none; }
.tree li { display: flex; align-items: center; height: 18px; }
.tree .child { padding-left: 14px; }
.doc { width: 12px; height: 16px; }
.tree .doc { margin: 0 8px 0 6px; }
.open { width: 8px; height: 5px; margin-left: 2px; margin-right: 1px; background: #5c5c5c; clip-path: polygon(0 0, 100% 0, 50% 100%); }
.shut { display: block; width: 5px; height: 8px; margin-left: 2px; background: #5c5c5c; clip-path: polygon(0 0, 100% 50%, 0 100%); }
.eye { width: 13px; height: 10px; margin: 0 7px 0 8px; }
.tree .i16 { margin-right: 6px; }

/* property table */
.props { flex: 405 1 0; padding-right: 1px; border: 1px solid #c6c6c6; border-radius: 2px; overflow: hidden; }
.props table { display: grid; grid-template-columns: 12px 88px 1fr; }
.props thead, .props tbody, .props tr { display: contents; }
.props thead th { grid-column: 1 / -1; height: 18px; padding: 0 3px; background: #dcdcdc; border-bottom: 1px solid #c6c6c6; text-align: left; line-height: 18px; }
.props tbody td, .props tbody th { height: 19px; padding: 0 3px; line-height: 20px; font-weight: 400; text-align: left; white-space: nowrap; overflow: hidden; border-bottom: 1px solid #c6c6c6; }
.props tbody th { border-right: 1px solid #c6c6c6; padding-right: 0; }
.props tbody td:first-child { border-bottom: 0; padding: 0; }
.props .shut { margin: 6px 0 0 4px; }
.props label { display: flex; align-items: center; gap: 6px; height: 19px; }
.props input { appearance: none; width: 13px; height: 13px; margin: 0; border: 1px solid #c0c0c0; border-radius: 2px; background: #fff; }
.props input:checked::after {
  content: "";
  display: block;
  width: 4px;
  height: 8px;
  margin: 0 auto;
  border: solid #000;
  border-width: 0 2px 2px 0;
  transform: rotate(40deg);
}
.prop-tabs { display: flex; padding-left: 83px; height: 26px; }
.prop-tabs button { width: 46px; padding-top: 2px; border: 1px solid #c6c6c6; border-top: 0; border-radius: 0 0 3px 3px; background: #dcdcdc; }
.prop-tabs .active { background: #f7f7f7; font-weight: 700; }

/* 3D viewer */
.viewer { flex: 1; display: flex; flex-direction: column; min-width: 0; }
.view3d { position: relative; flex: 1; min-height: 0; background: #f7f7f7; }
.model { width: 100%; height: 100%; }
.navcube { position: absolute; top: 0; right: 0; width: 150px; height: 147px; }
.face { font: 70px "Noto Sans CJK JP", sans-serif; fill: #808080; }
.axes { position: absolute; right: 6px; bottom: 22px; width: 50px; height: 57px; }
.axes text { font: 700 25px "DejaVu Sans", sans-serif; }
.doc-tabs { display: flex; height: 30px; }
.tab { display: flex; align-items: center; border: 1px solid #c0c0c0; border-radius: 0 0 3px 3px; background: #dcdcdc; }
.tab .x { width: 12px; height: 12px; }
.tab:first-child { width: 90px; padding-left: 5px; gap: 11px; }
.tab .logo { width: 14px; height: 16px; }
.tab:first-child .x { margin-left: 2px; }
.tab.active { width: 160px; padding-left: 6px; gap: 12px; border-top-color: #f7f7f7; background: #f7f7f7; }
.tab.active .x { margin-left: 3px; }
.rest { flex: 1; margin-left: -1px; height: 2px; border-bottom: 1px solid #b8b8b8; background: #f7f7f7; }

/* status bar */
.status { display: flex; justify-content: flex-end; align-items: center; height: 31px; }
.swatch, .navstyle, .dims { display: flex; align-items: center; }
.swatch { gap: 7px; margin-right: 21px; }
.swatch svg { width: 14px; height: 14px; }
.navstyle { gap: 5px; margin-right: 18px; }
.navstyle svg { width: 10px; height: 14px; }
.navstyle select { width: 40px; }
.dims { justify-content: space-between; width: 161px; margin-right: 10px; }
.sizegrip {
  align-self: flex-end;
  width: 12px;
  height: 12px;
  background: radial-gradient(circle at 1px 1px, #888 1px, transparent 1px) 0 0 / 3px 3px;
  clip-path: polygon(100% 0, 100% 100%, 0 100%);
}
```
